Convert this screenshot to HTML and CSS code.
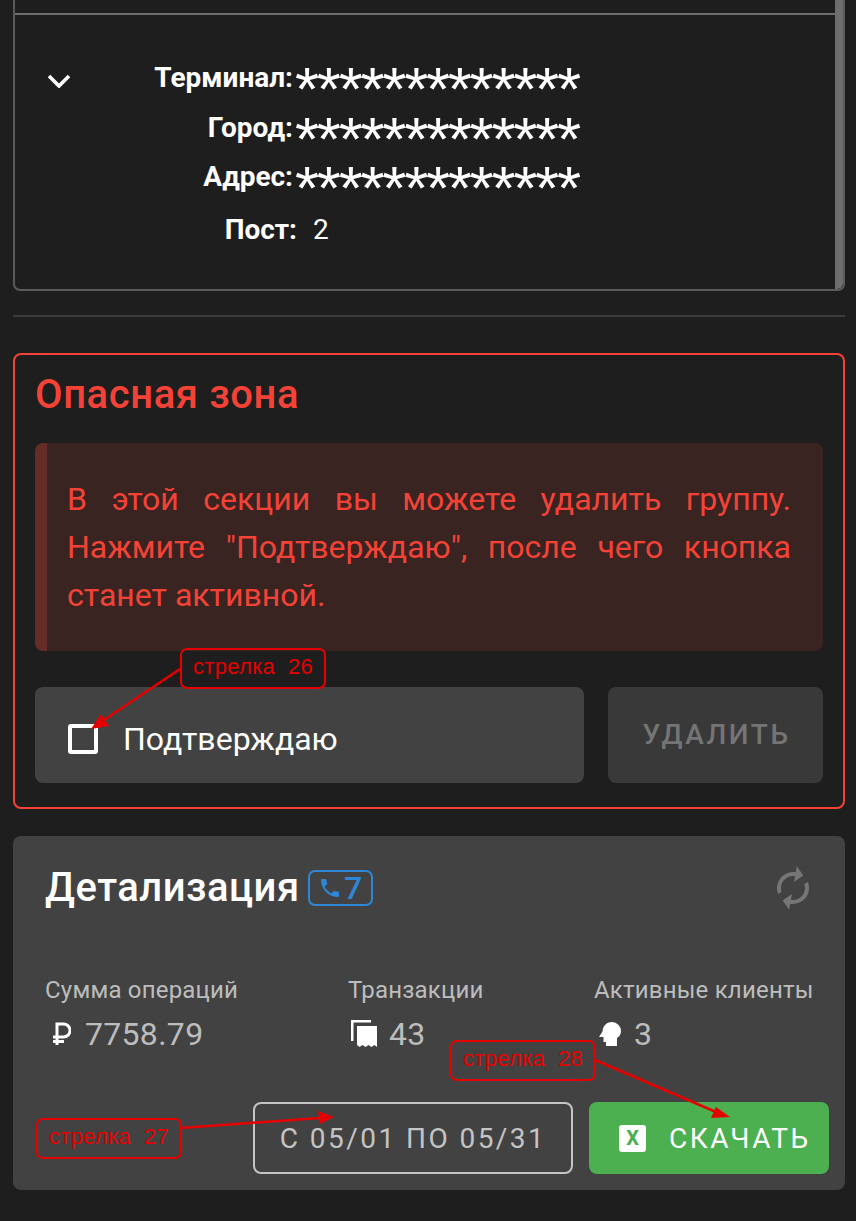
FILE: index.html
```html
<!DOCTYPE html>
<html lang="ru">
<head>
<meta charset="utf-8">
<title>Детализация</title>
<link rel="stylesheet" href="styles.css">
</head>
<body>
<main class="page">
  <section class="terminal">
    <div class="terminal-inner">
      <div class="terminal-head"></div>
      <div class="terminal-body">
        <svg class="chevron" viewBox="0 0 24 14"><polyline points="2,2 12,12 22,2"/></svg>
        <div class="info">
          <div class="info-row"><span class="info-label">Терминал:</span><span class="stars">*************</span></div>
          <div class="info-row"><span class="info-label">Город:</span><span class="stars">*************</span></div>
          <div class="info-row info-row-tight"><span class="info-label">Адрес:</span><span class="stars">*************</span></div>
          <div class="info-row info-row-post"><span class="info-label">Пост:</span><span class="info-value">2</span></div>
        </div>
      </div>
    </div>
    <div class="scrollbar"></div>
  </section>
  <hr class="rule">
  <section class="danger">
    <h2 class="danger-title">Опасная зона</h2>
    <p class="danger-note">В этой секции вы можете удалить группу. Нажмите "Подтверждаю", после чего кнопка станет активной.</p>
    <div class="danger-actions">
      <label class="confirm"><span class="checkbox"></span><span>Подтверждаю</span></label>
      <div class="delete">УДАЛИТЬ</div>
    </div>
  </section>
  <section class="details">
    <header class="details-head">
      <h2 class="details-title">Детализация</h2>
      <span class="chip">
        <svg class="chip-icon" viewBox="0 0 24 24"><path d="M6.62,10.79C8.06,13.62 10.38,15.94 13.21,17.38L15.41,15.18C15.69,14.9 16.08,14.82 16.43,14.93C17.55,15.3 18.75,15.5 20,15.5A1,1 0 0,1 21,16.5V20A1,1 0 0,1 20,21A17,17 0 0,1 3,4A1,1 0 0,1 4,3H7.5A1,1 0 0,1 8.5,4C8.5,5.25 8.7,6.45 9.07,7.57C9.18,7.92 9.1,8.31 8.82,8.59L6.62,10.79Z"/></svg>7
      </span>
      <svg class="refresh" viewBox="0 0 24 24"><path d="M12,18A6,6 0 0,1 6,12C6,11 6.25,10.03 6.7,9.2L5.24,7.74C4.46,8.97 4,10.43 4,12A8,8 0 0,0 12,20V23L16,19L12,15M12,4V1L8,5L12,9V6A6,6 0 0,1 18,12C18,13 17.75,13.97 17.3,14.8L18.76,16.26C19.54,15.03 20,13.57 20,12A8,8 0 0,0 12,4Z"/></svg>
    </header>
    <div class="stats">
      <div class="stat stat-sum">
        <div class="stat-label">Сумма операций</div>
        <div class="stat-value">
          <svg class="stat-icon ruble" viewBox="0 0 20 26"><path d="M6 24V3H12.500a6 6 0 0 1 0 13H2M2 20.500H13"/></svg>
          <span>7758.79</span>
        </div>
      </div>
      <div class="stat stat-tx">
        <div class="stat-label">Транзакции</div>
        <div class="stat-value">
          <svg class="stat-icon receipt" viewBox="0 0 26 28"><path d="M0 0H20V2.500H2.500V21H0Z"/><path d="M6 6H26V27L23.500 25L20.500 27L17.500 25L14.500 27L11.500 25L8.500 27L6 25Z"/></svg>
          <span>43</span>
        </div>
      </div>
      <div class="stat stat-clients">
        <div class="stat-label">Активные клиенты</div>
        <div class="stat-value">
          <svg class="stat-icon head" viewBox="0 0 22 24"><path d="M13 0a9 9 0 0 1 9 9c0 3.500-1.500 5.500-4 7v8H7v-4H4.500V15H0L3.500 9.500C3.800 4 7.500 0 13 0Z"/></svg>
          <span>3</span>
        </div>
      </div>
    </div>
    <div class="details-actions">
      <div class="date-range">С 05/01 ПО 05/31</div>
      <div class="download"><span class="excel">X</span><span>СКАЧАТЬ</span></div>
    </div>
  </section>
</main>
<div class="callout callout-26">стрелка&nbsp; 26</div>
<div class="callout callout-27">стрелка&nbsp; 27</div>
<div class="callout callout-28">стрелка&nbsp; 28</div>
<svg class="arrows" viewBox="0 0 856 1221">
  <path class="arrow-line" d="M180 669L104 720"/>
  <path class="arrow-head" d="M91 729L101 714L109 726Z"/>
  <path class="arrow-line" d="M181 1128L320 1118"/>
  <path class="arrow-head" d="M334 1117L318 1111L320 1124Z"/>
  <path class="arrow-line" d="M595 1060L716 1112"/>
  <path class="arrow-head" d="M730 1117L716 1107L711 1118Z"/>
</svg>
</body>
</html>
```
FILE: styles.css
```css
* { box-sizing: border-box; }
html, body { margin: 0; padding: 0; }
body {
  position: relative;
  width: 856px;
  height: 1221px;
  overflow: hidden;
  background: #1e1e1e;
  font-family: Roboto, "Noto Sans", sans-serif;
  color: #fff;
}
.page { padding: 0 11px 0 13px; display: flex; flex-direction: column; width: 856px; }

.terminal {
  display: flex;
  height: 291px;
  border: 2px solid #5a5a5a;
  border-top: 0;
  border-radius: 0 0 7px 7px;
}
.terminal-inner { flex: 1; display: flex; flex-direction: column; }
.terminal-head { height: 15px; border-bottom: 2px solid #6e6e6e; }
.terminal-body { display: flex; padding: 38px 0 0 32px; }
.scrollbar { width: 8px; background: #6e6e6e; border-radius: 0 0 6px 0; }
.chevron { width: 24px; height: 14px; margin-top: 21px; fill: none; stroke: #fff; stroke-width: 3.6; flex: none; }
.info-row { display: flex; height: 50px; align-items: center; }
.info-row-tight { margin-top: -1px; }
.info-row-post { margin-top: 2px; }
.info-label {
  width: 222px;
  margin-top: -2px;
  text-align: right;
  font-size: 28px;
  font-weight: 700;
}
.stars {
  margin-left: 2px;
  height: 30px;
  font-family: "Liberation Sans", sans-serif;
  font-size: 62px;
  line-height: 52px;
  letter-spacing: -2.3px;
  color: #fff;
  filter: blur(0.7px);
  white-space: nowrap;
}
.info-row-post .info-label { width: 226px; margin-top: 0; }
.info-value { margin-left: 16px; font-size: 28px; }

.rule { width: 832px; height: 2px; border: 0; margin: 24px 0 36px; background: #3c3c3c; }

.danger {
  width: 832px;
  height: 456px;
  border: 2px solid #f44336;
  border-radius: 8px;
  padding: 0 20px;
}
.danger-title {
  margin: 16px 0 0;
  font-size: 40px;
  line-height: 48px;
  font-weight: 500;
  letter-spacing: 0.6px;
  color: #f44336;
}
.danger-note {
  margin: 24px 0 0;
  height: 208px;
  padding: 32px 32px 32px 20px;
  border-left: 12px solid #662d28;
  border-radius: 8px;
  background: #3a2422;
  color: #f44336;
  font-size: 32px;
  line-height: 48px;
  text-align: justify;
}
.danger-actions { display: flex; gap: 24px; margin-top: 36px; }
.confirm {
  display: flex;
  align-items: center;
  gap: 25px;
  width: 549px;
  height: 96px;
  padding: 8px 0 0 33px;
  border-radius: 8px;
  background: #424242;
  font-size: 32px;
}
.checkbox { width: 30px; height: 30px; border: 4px solid #fff; border-radius: 3px; }
.delete {
  display: flex;
  align-items: center;
  justify-content: center;
  width: 215px;
  height: 96px;
  padding: 0 0 2px 2px;
  border-radius: 8px;
  background: #393939;
  color: #757575;
  font-size: 28px;
  font-weight: 500;
  letter-spacing: 2.5px;
}

.details {
  width: 832px;
  height: 354px;
  margin-top: 27px;
  border-radius: 8px;
  background: #424242;
  padding: 0 16px 0 32px;
  display: flex;
  flex-direction: column;
}
.details-head { display: flex; align-items: center; height: 52px; margin-top: 26px; }
.details-title { margin: 0; font-size: 40px; line-height: 52px; font-weight: 500; letter-spacing: 0.5px; }
.chip {
  display: flex;
  align-items: center;
  justify-content: center;
  gap: 2px;
  width: 65px;
  height: 36px;
  margin-left: 8px;
  border: 2px solid #2f86d6;
  border-radius: 7px;
  color: #2f86d6;
  font-size: 32px;
  font-weight: 500;
}
.chip-icon { width: 24px; height: 24px; fill: #2f86d6; }
.refresh { width: 48px; height: 48px; margin-left: auto; margin-right: 12px; fill: #767676; transform: scaleX(-1) rotate(-10deg); }
.stats { display: flex; margin-top: 62px; }
.stat-sum { width: 303px; }
.stat-tx { width: 246px; }
.stat-label { font-size: 24px; line-height: 28px; letter-spacing: 0.2px; color: #bdbdbd; }
.stat-value { display: flex; align-items: center; margin-top: 14px; height: 32px; font-size: 32px; letter-spacing: 0.3px; color: #bdbdbd; }
.stat-icon { flex: none; fill: #fff; }
.ruble { width: 20px; height: 26px; margin: 0 14px 0 6px; fill: none; stroke: #fff; stroke-width: 3; }
.receipt { width: 26px; height: 28px; margin: 0 12px 0 3px; }
.head { width: 22px; height: 24px; margin: 0 13px 0 5px; }
.details-actions { display: flex; justify-content: flex-end; gap: 16px; margin-top: 52px; }
.date-range {
  display: flex;
  align-items: center;
  justify-content: center;
  width: 320px;
  height: 72px;
  border: 2px solid #c4c4c4;
  border-radius: 8px;
  color: #c4c4c4;
  font-size: 28px;
  font-weight: 400;
  letter-spacing: 2.45px;
}
.download {
  display: flex;
  align-items: center;
  gap: 23px;
  width: 240px;
  height: 72px;
  padding-left: 30px;
  border-radius: 8px;
  background: #4caf50;
  color: #fff;
  font-size: 28px;
  font-weight: 400;
  letter-spacing: 2.5px;
}
.excel {
  display: flex;
  align-items: center;
  justify-content: center;
  width: 27px;
  height: 27px;
  border-radius: 3px;
  background: #fff;
  color: #4caf50;
  font-size: 20px;
  font-weight: 700;
  letter-spacing: 0;
}

.callout {
  position: absolute;
  width: 146px;
  height: 41px;
  border: 2px solid #e60000;
  border-radius: 7px;
  color: #e60000;
  font-family: "Liberation Sans", sans-serif;
  font-size: 22px;
  letter-spacing: 0.3px;
  line-height: 34px;
  text-align: center;
  white-space: nowrap;
}
.callout-26 { left: 180px; top: 648px; }
.callout-27 { left: 36px; top: 1118px; }
.callout-28 { left: 450px; top: 1040px; }
.arrows { position: absolute; left: 0; top: 0; width: 856px; height: 1221px; pointer-events: none; }
.arrow-line { fill: none; stroke: #e60000; stroke-width: 2.5; }
.arrow-head { fill: #e60000; }
```
